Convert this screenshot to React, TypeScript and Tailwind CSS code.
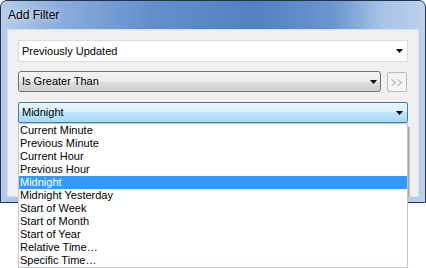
const options = [
  "Current Minute",
  "Previous Minute",
  "Current Hour",
  "Previous Hour",
  "Midnight",
  "Midnight Yesterday",
  "Start of Week",
  "Start of Month",
  "Start of Year",
  "Relative Time…",
  "Specific Time…",
];

const selected = "Midnight";

function Arrow() {
  return (
    <svg width="7" height="4" viewBox="0 0 7 4" className="shrink-0">
      <polygon points="0,0 7,0 3.5,4" fill="#000" />
    </svg>
  );
}

export default function App() {
  return (
    <div className="relative w-[426px] h-[268px] bg-white overflow-hidden font-['Liberation_Sans',Arial,sans-serif] text-black">
      {/* window */}
      <div className="h-[203px] rounded-t-[7px] border border-[#23324d] bg-[linear-gradient(to_right,#b7cdea_0%,#8fb0de_12%,#6390cd_35%,#5181c2_60%,#6a95cf_78%,#a9c3e6_90%,#bcd1ec_100%)] flex flex-col px-[6px] pb-[5px]">
        <div className="h-[28px] flex items-center pl-[1px] text-[12px] [text-shadow:0_0_6px_rgba(255,255,255,0.95)]">
          Add Filter
        </div>
        <div className="flex-1 border border-[#d6e0ec] bg-[#f0f0f0] px-[10px] pt-[10px] flex flex-col">
          <div className="h-[22px] flex items-center border border-[#dcdcdc] bg-white pl-[3px] pr-[4px] text-[11px]">
            <span className="flex-1">Previously Updated</span>
            <Arrow />
          </div>
          <div className="mt-[9px] flex items-start">
            <div className="flex-1 h-[21px] flex items-center rounded-[3px] border border-[#707070] bg-[linear-gradient(to_bottom,#f3f3f3_0%,#ebebeb_50%,#dedede_50%,#cfcfcf_100%)] pl-[3px] pr-[3px] text-[11px]">
              <span className="flex-1">Is Greater Than</span>
              <Arrow />
            </div>
            <div className="ml-[6px] mr-[1px] mt-[1px] w-[20px] h-[20px] flex items-center justify-center rounded-[2px] border border-[#b8bcbf] bg-[#f4f4f4]">
              <svg width="12" height="7" viewBox="0 0 12 7" fill="none" stroke="#a0a0a0" strokeWidth="1">
                <polyline points="0.5,0.5 4.5,3.5 0.5,6.5" />
                <polyline points="6.5,0.5 10.5,3.5 6.5,6.5" />
              </svg>
            </div>
          </div>
          <div className="mt-[10px] h-[21px] flex items-center rounded-[2px] border border-[#3c7fb1] bg-[linear-gradient(to_bottom,#eaf6fd_0%,#d9f0fc_50%,#bee6fd_50%,#a7d9f5_100%)] pl-[3px] pr-[4px] text-[11px]">
            <span className="flex-1">Midnight</span>
            <Arrow />
          </div>
        </div>
      </div>

      {/* shadow of the open list over the window */}
      <div className="absolute left-[408px] top-[127px] w-[2px] h-[70px] bg-[linear-gradient(to_right,#9a9a9a,#d0d0d0)]" />

      {/* open dropdown list */}
      <div className="absolute left-[18px] top-[123px] w-[390px] border border-[#c3c6cc] bg-white text-[11px]">
        {options.map((o) => (
          <div
            key={o}
            className={
              o === selected
                ? "h-[13px] leading-[13px] pl-[1px] bg-[#3399ff] text-white"
                : "h-[13px] leading-[13px] pl-[1px]"
            }
          >
            {o}
          </div>
        ))}
      </div>
    </div>
  );
}
